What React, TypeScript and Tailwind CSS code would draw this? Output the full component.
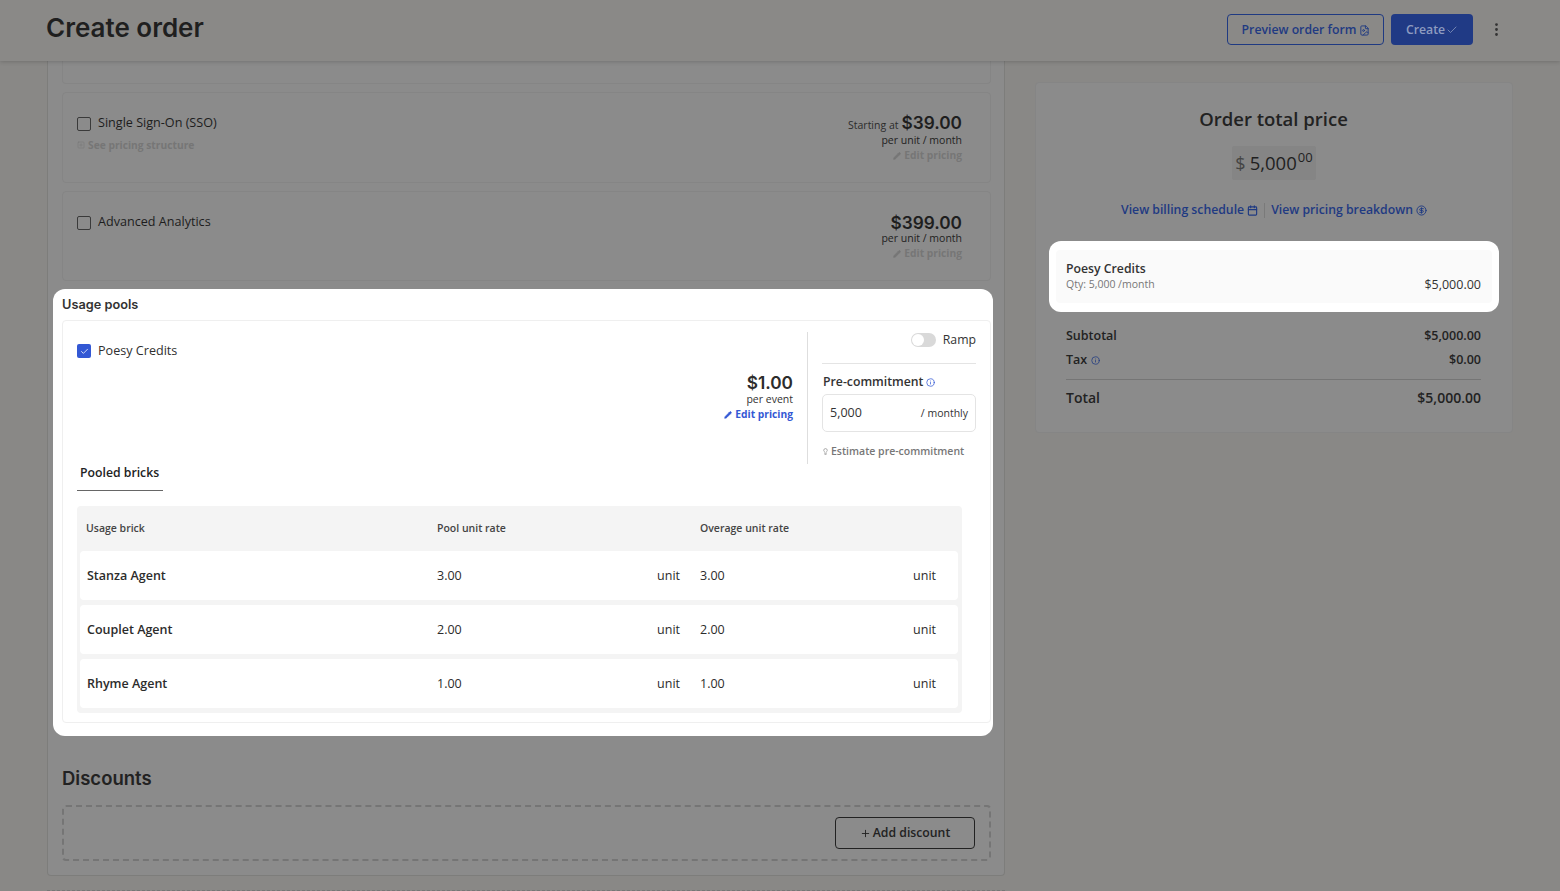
import { Calendar, Check, CircleDollarSign, EllipsisVertical, FileImage, Info, Lightbulb, Pencil, Plus, SquarePlus } from 'lucide-react';

const heading = 'font-["Inter",sans-serif]';

function AddonCard({ name, note, prefix, price, height }: { name: string; note?: string; prefix?: string; price: string; height: string }) {
  return (
    <div className={`${height} flex justify-between rounded border border-[#858585] pl-[14px] pr-[28px]`}>
      <div className="pt-[21px]">
        <div className="flex items-center gap-[7px] text-[12.6px] leading-[18px] font-medium text-[#1d1d1d]">
          <span className="mt-[2px] size-[14px] rounded-[2px] border border-[#3a3a3a]" />
          {name}
        </div>
        {note && (
          <div className="mt-[5px] flex items-center gap-[3px] text-[10.25px] leading-[16px] font-bold text-[#767676]">
            <SquarePlus size={8} strokeWidth={1.5} />
            {note}
          </div>
        )}
      </div>
      <div className={`${prefix ? 'pt-[17px]' : 'pt-[18px]'} text-right`}>
        <div className={`${prefix ? 'h-[28px]' : 'h-[26px]'} flex items-baseline justify-end gap-[3px] leading-[26px]`}>
          {prefix && <span className="text-[10.5px] text-[#2c2c2c]">{prefix}</span>}
          <span className={`${heading} text-[17.25px] font-semibold text-[#1e1e1e]`}>{price}</span>
        </div>
        <div className="-mt-[5px] text-[10.5px] leading-[14px] text-[#222]">per unit / month</div>
        <div className="flex items-center justify-end gap-[3px] pt-[1px] text-[10.25px] leading-[15px] font-bold text-[#767676]">
          <Pencil size={8} fill="currentColor" />
          Edit pricing
        </div>
      </div>
    </div>
  );
}

function BrickRow({ name, pool, overage }: { name: string; pool: string; overage: string }) {
  return (
    <div className="grid h-[49px] grid-cols-[350px_243px_256px] items-center rounded bg-white pt-[1px] pl-[7px] text-[12.5px] text-[#2c2c2c]">
      <span className="font-semibold">{name}</span>
      <span className="flex justify-between">
        <span>{pool}</span>
        <span>unit</span>
      </span>
      <span className="ml-[20px] flex justify-between">
        <span>{overage}</span>
        <span>unit</span>
      </span>
    </div>
  );
}

export default function App() {
  return (
    <div className='flex h-[891px] w-[1560px] flex-col overflow-hidden bg-[#898886] font-["Open_Sans",sans-serif]'>
      <header className="z-10 flex h-[61px] shrink-0 items-center justify-between bg-[#8a8987] pr-[55px] pl-[46px] shadow-[0_1px_4px_rgba(0,0,0,0.18)]">
        <h1 className={`${heading} pb-[6px] text-[26px] font-semibold text-[#1f1f1f]`}>Create order</h1>
        <div className="flex items-center pb-[2px]">
          <button className="flex h-[31px] w-[157px] items-center justify-center gap-[3px] rounded border border-[#1f3a82] pt-[1px] pl-[1px] text-[12.25px] font-semibold text-[#1f3a82]">
            Preview order form
            <FileImage size={11} />
          </button>
          <button className="ml-[7px] flex h-[31px] w-[82px] items-center justify-center gap-[1px] rounded bg-[#203a85] pt-[1px] text-[12.25px] font-semibold text-[#8e9cc0]">
            Create
            <Check size={12} strokeWidth={1.5} />
          </button>
          <EllipsisVertical className="ml-[15px] text-[#333]" size={17} />
        </div>
      </header>

      <main className="flex flex-1 items-start gap-[30px] overflow-hidden pl-[47px]">
        <div className="w-[958px] shrink-0">
          <div className="rounded-b border border-t-0 border-[#7d7d7b] bg-[#8b8b8b] pr-[13px] pb-[14px] pl-[14px]">
            <div className="h-[23px] rounded-b border border-t-0 border-[#858585]" />
            <div className="mt-[8px] flex flex-col gap-[8px]">
              <AddonCard name="Single Sign-On (SSO)" note="See pricing structure" prefix="Starting at" price="$39.00" height="h-[91px]" />
              <AddonCard name="Advanced Analytics" price="$399.00" height="h-[90px]" />
            </div>

            <section className="relative mt-[8px] -mr-[2px] -ml-[9px] h-[447px] rounded-xl bg-white pt-[9px] pr-[2px] pl-[9px]">
              <h2 className={`${heading} text-[12.75px] leading-[14px] font-semibold text-[#333]`}>Usage pools</h2>
              <div className="mt-[8px] h-[403px] rounded border border-[#efefef] pr-[14px] pl-[14px]">
                <div className="flex h-[143px] pt-[11px]">
                  <div className="flex flex-1 flex-col pt-[10px] pr-[14px]">
                    <div className="flex items-center gap-[7px] text-[12.6px] leading-[18px] font-medium text-[#2f2f2f]">
                      <span className="flex size-[14px] items-center justify-center rounded-[2px] bg-[#3358d4]">
                        <Check size={9} strokeWidth={2} className="text-white" />
                      </span>
                      Poesy Credits
                    </div>
                    <div className="mt-[10px] text-right">
                      <div className={`${heading} text-[17.25px] leading-[26px] font-semibold text-[#2c2c2c]`}>$1.00</div>
                      <div className="-mt-[4px] text-[10.5px] leading-[14px] text-[#333]">per event</div>
                      <div className="mt-[1px] flex items-center justify-end gap-[3px] text-[10.25px] leading-[15px] font-bold text-[#3358d4]">
                        <Pencil size={8} fill="currentColor" />
                        Edit pricing
                      </div>
                    </div>
                  </div>
                  <div className="h-[132px] w-[169px] border-l border-[#dedede] pl-[14px]">
                    <div className="flex items-center justify-end gap-[7px] text-[12.25px] leading-[16px] text-[#333]">
                      <span className="flex h-[14px] w-[25px] items-center rounded-full bg-[#d9d9d9] pl-[1px]">
                        <span className="size-[12px] rounded-full bg-white" />
                      </span>
                      Ramp
                    </div>
                    <div className="mt-[15px] border-t border-[#e4e4e4] pt-[10px]">
                      <div className="flex items-center gap-[3px] pl-[1px] text-[12.25px] leading-[16px] font-semibold text-[#333]">
                        Pre-commitment
                        <Info size={9} className="text-[#3358d4]" />
                      </div>
                      <div className="mt-[4px] flex h-[38px] items-center justify-between rounded-[5px] border border-[#e4e4e4] px-[7px] text-[#333]">
                        <span className="text-[12.5px]">5,000</span>
                        <span className="pt-[1px] text-[10.5px]">/ monthly</span>
                      </div>
                      <div className="mt-[11px] flex items-center gap-[2px] text-[10.5px] leading-[16px] font-semibold text-[#777]">
                        <Lightbulb size={7} />
                        Estimate pre-commitment
                      </div>
                    </div>
                  </div>
                </div>

                <div className="w-[86px] border-b border-[#666] pb-[9px] pl-[3px] text-[12.25px] leading-[17px] font-semibold text-[#222]">Pooled bricks</div>

                <div className="mt-[15px] w-[885px] rounded bg-[#f4f4f4] pr-[4px] pb-[5px] pl-[3px]">
                  <div className="grid h-[45px] grid-cols-[351px_263px_1fr] items-center pl-[6px] text-[10.5px] font-semibold text-[#444]">
                    <span>Usage brick</span>
                    <span>Pool unit rate</span>
                    <span>Overage unit rate</span>
                  </div>
                  <div className="flex flex-col gap-[5px]">
                    <BrickRow name="Stanza Agent" pool="3.00" overage="3.00" />
                    <BrickRow name="Couplet Agent" pool="2.00" overage="2.00" />
                    <BrickRow name="Rhyme Agent" pool="1.00" overage="1.00" />
                  </div>
                </div>
              </div>
            </section>

            <h2 className={`${heading} mt-[30px] text-[18.5px] leading-[24px] font-semibold text-[#222]`}>Discounts</h2>
            <div className="mt-[15px] flex h-[56px] items-center justify-end rounded border-2 border-dashed border-[#757575] pr-[14px]">
              <button className="flex h-[32px] w-[140px] items-center justify-center gap-[2px] rounded border border-[#222] text-[12.25px] font-semibold text-[#222]">
                <Plus size={11} />
                Add discount
              </button>
            </div>
          </div>
          <div className="mt-[14px] h-[10px] border-t border-dashed border-[#767676]" />
        </div>

        <aside className="mt-[21px] h-[351px] w-[478px] shrink-0 rounded border border-[#858585] bg-[#8b8b8b] px-[13px]">
          <h2 className="mt-[23px] pr-[1px] text-center text-[18.5px] leading-[26px] font-semibold text-[#222]">Order total price</h2>
          <div className="mt-[14px] flex justify-center">
            <div className="flex h-[34px] w-[84px] items-center justify-center gap-[4px] rounded-[2px] bg-[#858585]">
              <span className="text-[18px] text-[#444]">$</span>
              <span className="flex items-start text-[#1f1f1f]">
                <span className="text-[18.5px] leading-[26px]">5,000</span>
                <span className="-mt-[2px] ml-[1px] text-[13px] leading-[18px]">00</span>
              </span>
            </div>
          </div>
          <div className="mt-[21px] flex items-center justify-center text-[12.25px] leading-[18px] font-semibold text-[#1f3a82]">
            <span className="flex items-center gap-[3px]">
              View billing schedule
              <Calendar size={11} strokeWidth={2.5} />
            </span>
            <span className="mx-[6px] h-[15px] w-px bg-[#7a7a7a]" />
            <span className="flex items-center gap-[3px]">
              View pricing breakdown
              <CircleDollarSign size={11} />
            </span>
          </div>

          <div className="mt-[22px] flex h-[71px] items-center rounded-xl bg-white px-[7px]">
            <div className="flex h-[53px] w-full items-end justify-between rounded bg-[#fafafa] pr-[11px] pb-[11px] pl-[10px] text-[#333]">
              <div>
                <div className="text-[12.25px] leading-[17px] font-semibold">Poesy Credits</div>
                <div className="text-[10.5px] leading-[15px] text-[#777]">Qty: 5,000 /month</div>
              </div>
              <span className="text-[12.5px] leading-[15px]">$5,000.00</span>
            </div>
          </div>

          <div className="pr-[18px] pl-[17px] font-semibold text-[#222]">
            <div className="mt-[15px] flex justify-between text-[12.5px] leading-[18px]">
              <span>Subtotal</span>
              <span>$5,000.00</span>
            </div>
            <div className="mt-[6px] flex justify-between text-[12.5px] leading-[18px]">
              <span className="flex items-center gap-[4px]">
                Tax
                <Info size={9} className="text-[#1f3a82]" />
              </span>
              <span>$0.00</span>
            </div>
            <div className="mt-[10px] flex justify-between border-t border-[#757575] pt-[8px] text-[14px] leading-[20px]">
              <span>Total</span>
              <span>$5,000.00</span>
            </div>
          </div>
        </aside>
      </main>
    </div>
  );
}
